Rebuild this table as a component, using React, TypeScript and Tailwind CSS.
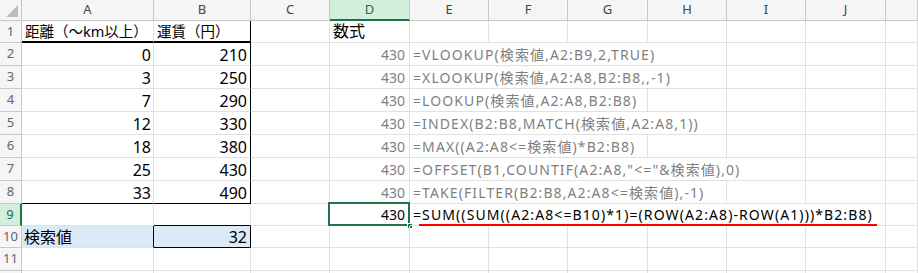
import React from "react";

type Row = {
  h: number;
  a?: string;
  b?: string;
  d?: string;
  e?: string;
  span?: number;
  head?: boolean;
};

// row heights follow the sheet: header 21, then rows of 22/23
const ROWS: Row[] = [
  { h: 22, a: "距離（～km以上）", b: "運賃（円）", d: "数式", head: true },
  { h: 23, a: "0", b: "210", d: "430", e: "=VLOOKUP(検索値,A2:B9,2,TRUE)", span: 4 },
  { h: 23, a: "3", b: "250", d: "430", e: "=XLOOKUP(検索値,A2:A8,B2:B8,,-1)", span: 4 },
  { h: 23, a: "7", b: "290", d: "430", e: "=LOOKUP(検索値,A2:A8,B2:B8)", span: 3 },
  { h: 23, a: "12", b: "330", d: "430", e: "=INDEX(B2:B8,MATCH(検索値,A2:A8,1))", span: 4 },
  { h: 23, a: "18", b: "380", d: "430", e: "=MAX((A2:A8<=検索値)*B2:B8)", span: 3 },
  { h: 23, a: "25", b: "430", d: "430", e: '=OFFSET(B1,COUNTIF(A2:A8,"<="&検索値),0)', span: 5 },
  { h: 23, a: "33", b: "490", d: "430", e: "=TAKE(FILTER(B2:B8,A2:A8<=検索値),-1)", span: 4 },
  { h: 22, d: "430", e: "=SUM((SUM((A2:A8<=B10)*1)=(ROW(A2:A8)-ROW(A1)))*B2:B8)", span: 6 },
  { h: 22, a: "検索値", b: "32" },
  { h: 23 },
  { h: 23 },
];

const COLS = ["A", "B", "C", "D", "E", "F", "G", "H", "I", "J", ""];
const GRID = "grid grid-cols-[22px_132px_97px_79px_80px_79px_79px_80px_79px_79px_80px_1fr]";
const cell = "border-r border-b border-[#e1e1e1] flex items-end whitespace-nowrap overflow-visible leading-none";

function Corner() {
  return (
    <div className="h-[21px] bg-[#f5f5f5] border-r border-b border-[#c8c8c8] relative">
      <svg width="22" height="21" className="absolute left-0 top-0">
        <polygon points="6,17 18,17 18,5" fill="#bdbdbd" />
      </svg>
    </div>
  );
}

export default function App() {
  return (
    <div className="w-[918px] h-[273px] overflow-hidden bg-white font-['Noto_Sans','Noto_Sans_CJK_JP',sans-serif] text-black">
      {/* column headers */}
      <div className={GRID}>
        <Corner />
        {COLS.map((c) =>
          c === "D" ? (
            <div
              key={c}
              className="h-[21px] bg-[#d2eedd] border-r border-[#c8c8c8] border-b-2 border-b-[#217346] text-[#217346] text-[13px] flex items-center justify-center"
            >
              {c}
            </div>
          ) : (
            <div
              key={c || "k"}
              className="h-[21px] bg-[#f5f5f5] border-r border-b border-[#c8c8c8] text-[#444] text-[13px] flex items-center justify-center"
            >
              {c}
            </div>
          )
        )}
      </div>

      {ROWS.map((r, i) => {
        const n = i + 1;
        const sel = n === 9;
        const span = r.span ?? 1;
        const rest = 7 - span; // E..K = 7 columns
        const grey = r.e ? (sel ? "text-black" : "text-[#7f7f7f]") : "";
        const big = r.head ? "text-[14.5px] pb-[3px]" : "text-[16px] pb-[2px]";
        return (
          <div key={n} className={GRID} style={{ height: r.h }}>
            {/* row number */}
            <div
              className={
                sel
                  ? "bg-[#d2eedd] border-r-2 border-r-[#217346] border-b border-b-[#c8c8c8] text-[#217346] text-[13px] flex items-center justify-center"
                  : "bg-[#f5f5f5] border-r border-b border-[#c8c8c8] text-[#666] text-[13px] flex items-center justify-center"
              }
            >
              {n <= 11 ? n : ""}
            </div>

            {/* A */}
            <div
              className={`${cell} ${big} ${
                n === 1 ? "border-b-2 border-b-black pl-[3px]" : ""
              } ${n === 8 ? "border-b-black" : ""} ${
                n === 10 ? "bg-[#dce9f6] border-r-black pl-[2px]" : ""
              } ${r.head || n === 10 ? "" : "justify-end pr-[2px]"}`}
            >
              {r.a}
            </div>

            {/* B */}
            <div
              className={`${cell} ${big} ${n <= 8 ? "border-r-black" : ""} ${
                n === 1 ? "border-b-2 border-b-black pl-[3px]" : "justify-end pr-[3px]"
              } ${n === 8 || n === 9 ? "border-b-black" : ""} ${
                n === 10 ? "bg-[#dce9f6] border-r-black border-b-black" : ""
              }`}
            >
              {r.b}
            </div>

            {/* C */}
            <div className={cell} />

            {/* D */}
            <div
              className={`${cell} relative ${
                r.head ? "pl-[3px] text-[16px] pb-[3px]" : "justify-end pr-[4px] text-[14px] pb-[3px]"
              } ${r.d && !r.head && !sel ? "text-[#7f7f7f]" : ""}`}
            >
              {r.d}
              {sel && (
                <>
                  <div className="absolute left-[-2px] top-[-2px] right-[-1px] bottom-[-1px] border-2 border-[#217346]" />
                  <div className="absolute right-[-4px] bottom-[-4px] w-[6px] h-[6px] bg-[#217346] border border-white" />
                </>
              )}
            </div>

            {/* E (spans over the empty cells to its right) */}
            <div
              className={`${cell} relative pl-[3px] text-[14px] pb-[3px] tracking-[1.1px] ${grey}`}
              style={{ gridColumn: `span ${span} / span ${span}` }}
            >
              {r.e}
              {sel && (
                <div className="absolute left-[9px] w-[458px] bottom-[-1px] h-[2px] bg-[#ff0000]" />
              )}
            </div>
            {Array.from({ length: rest }).map((_, k) => (
              <div key={k} className={cell} />
            ))}
          </div>
        );
      })}
    </div>
  );
}
